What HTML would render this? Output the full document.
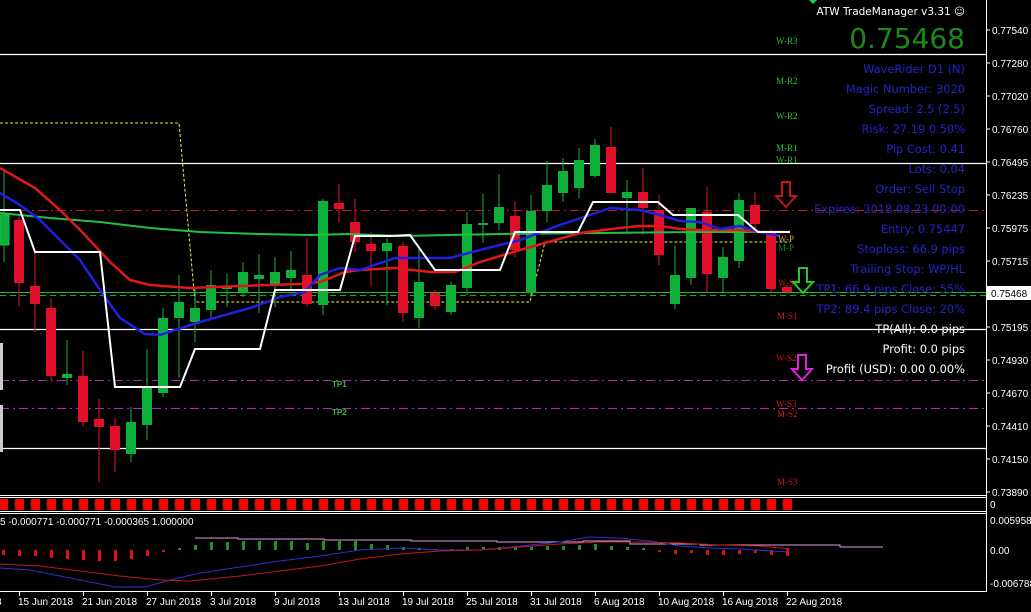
<!DOCTYPE html>
<html><head><meta charset="utf-8"><style>
html,body{margin:0;padding:0;background:#000;width:1031px;height:612px;overflow:hidden}
svg{display:block}
.ax{font-family:"Liberation Sans",sans-serif;font-size:10px;fill:#fff}
.info{font-family:"DejaVu Sans",sans-serif;font-size:11.4px;fill:#2424c8;text-anchor:end}
.pv{font-family:"Liberation Serif",serif;font-size:9px}
</style></head><body>
<svg width="1031" height="612" viewBox="0 0 1031 612" xmlns="http://www.w3.org/2000/svg">
<rect width="1031" height="612" fill="#000"/>
<g stroke="#fff" stroke-width="1.2">
<line x1="0" y1="54.5" x2="986" y2="54.5"/>
<line x1="0" y1="163.5" x2="986" y2="163.5"/>
<line x1="0" y1="329.5" x2="986" y2="329.5"/>
<line x1="0" y1="448.5" x2="986" y2="448.5"/>
</g>
<line x1="0" y1="210.5" x2="986" y2="210.5" stroke="#c81818" stroke-dasharray="9,4,2,4"/>
<line x1="0" y1="380.5" x2="986" y2="380.5" stroke="#c020c0" stroke-dasharray="9,4,2,4"/>
<line x1="0" y1="408.5" x2="986" y2="408.5" stroke="#c020c0" stroke-dasharray="9,4,2,4"/>
<line x1="0" y1="292.5" x2="986" y2="292.5" stroke="#22bb22"/>
<line x1="0" y1="295.5" x2="986" y2="295.5" stroke="#22aa22" stroke-dasharray="6,4"/>
<polyline fill="none" stroke="#f0f040" stroke-dasharray="3,2" points="0,123 179,123 195,302 530,302 545,242 790,242"/>
<rect x="0" y="343" width="3" height="47" fill="#ccc"/>
<rect x="0" y="405" width="3" height="47" fill="#ccc"/>
<g>
<line x1="4" y1="172" x2="4" y2="262" stroke="#1ab03a"/><rect x="0" y="215" width="9" height="30" fill="#0fb03a" stroke="#1ac04a"/>
<line x1="19" y1="215" x2="19" y2="307" stroke="#e0102a"/><rect x="14" y="220" width="10" height="63" fill="#e0102a"/>
<line x1="35" y1="252" x2="35" y2="332" stroke="#e0102a"/><rect x="30" y="286" width="10" height="18" fill="#e0102a"/>
<line x1="51" y1="298" x2="51" y2="380" stroke="#e0102a"/><rect x="46" y="308" width="10" height="68" fill="#e0102a"/>
<line x1="67" y1="340" x2="67" y2="385" stroke="#1ab03a"/><rect x="62" y="374" width="10" height="4" fill="#0fb03a"/>
<line x1="83" y1="351" x2="83" y2="427" stroke="#e0102a"/><rect x="78" y="376" width="10" height="46" fill="#e0102a"/>
<line x1="99" y1="399" x2="99" y2="483" stroke="#e0102a"/><rect x="94" y="419" width="10" height="8" fill="#e0102a"/>
<line x1="115" y1="418" x2="115" y2="472" stroke="#e0102a"/><rect x="110" y="426" width="10" height="24" fill="#e0102a"/>
<line x1="131" y1="407" x2="131" y2="462" stroke="#1ab03a"/><rect x="126" y="422" width="10" height="32" fill="#0fb03a"/>
<line x1="147" y1="349" x2="147" y2="440" stroke="#1ab03a"/><rect x="142" y="388" width="10" height="37" fill="#0fb03a"/>
<line x1="163" y1="308" x2="163" y2="397" stroke="#1ab03a"/><rect x="158" y="318" width="10" height="75" fill="#0fb03a"/>
<line x1="179" y1="275" x2="179" y2="378" stroke="#1ab03a"/><rect x="174" y="302" width="10" height="16" fill="#0fb03a"/>
<line x1="195" y1="287" x2="195" y2="342" stroke="#1ab03a"/><rect x="190" y="308" width="10" height="14" fill="#0fb03a"/>
<line x1="211" y1="270" x2="211" y2="318" stroke="#1ab03a"/><rect x="206" y="285" width="10" height="25" fill="#0fb03a"/>
<line x1="227" y1="274" x2="227" y2="307" stroke="#1ab03a"/><rect x="222" y="287" width="10" height="2" fill="#0fb03a"/>
<line x1="243" y1="262" x2="243" y2="297" stroke="#1ab03a"/><rect x="238" y="272" width="10" height="20" fill="#0fb03a"/>
<line x1="259" y1="254" x2="259" y2="313" stroke="#1ab03a"/><rect x="254" y="275" width="10" height="4" fill="#0fb03a"/>
<line x1="275" y1="257" x2="275" y2="307" stroke="#1ab03a"/><rect x="270" y="272" width="10" height="12" fill="#0fb03a"/>
<line x1="291" y1="251" x2="291" y2="290" stroke="#1ab03a"/><rect x="286" y="270" width="10" height="8" fill="#0fb03a"/>
<line x1="307" y1="238" x2="307" y2="307" stroke="#e0102a"/><rect x="302" y="275" width="10" height="29" fill="#e0102a"/>
<line x1="323" y1="199" x2="323" y2="315" stroke="#1ab03a"/><rect x="318" y="201" width="10" height="104" fill="#0fb03a"/>
<line x1="339" y1="184" x2="339" y2="223" stroke="#e0102a"/><rect x="334" y="203" width="10" height="6" fill="#e0102a"/>
<line x1="355" y1="199" x2="355" y2="252" stroke="#e0102a"/><rect x="350" y="222" width="10" height="20" fill="#e0102a"/>
<line x1="371" y1="232" x2="371" y2="286" stroke="#e0102a"/><rect x="366" y="244" width="10" height="7" fill="#e0102a"/>
<line x1="387" y1="238" x2="387" y2="305" stroke="#1ab03a"/><rect x="382" y="243" width="10" height="8" fill="#0fb03a"/>
<line x1="403" y1="242" x2="403" y2="322" stroke="#e0102a"/><rect x="398" y="246" width="10" height="67" fill="#e0102a"/>
<line x1="419" y1="247" x2="419" y2="328" stroke="#1ab03a"/><rect x="414" y="282" width="10" height="36" fill="#0fb03a"/>
<line x1="435" y1="290" x2="435" y2="310" stroke="#e0102a"/><rect x="430" y="293" width="10" height="13" fill="#e0102a"/>
<line x1="451" y1="282" x2="451" y2="315" stroke="#1ab03a"/><rect x="446" y="285" width="10" height="27" fill="#0fb03a"/>
<line x1="467" y1="212" x2="467" y2="295" stroke="#1ab03a"/><rect x="462" y="224" width="10" height="64" fill="#0fb03a"/>
<line x1="483" y1="194" x2="483" y2="243" stroke="#1ab03a"/><rect x="478" y="223" width="10" height="2" fill="#0fb03a"/>
<line x1="499" y1="174" x2="499" y2="230" stroke="#1ab03a"/><rect x="494" y="207" width="10" height="16" fill="#0fb03a"/>
<line x1="515" y1="201" x2="515" y2="257" stroke="#e0102a"/><rect x="510" y="216" width="10" height="34" fill="#e0102a"/>
<line x1="531" y1="195" x2="531" y2="297" stroke="#1ab03a"/><rect x="526" y="211" width="10" height="82" fill="#0fb03a"/>
<line x1="547" y1="161" x2="547" y2="222" stroke="#1ab03a"/><rect x="542" y="185" width="10" height="26" fill="#0fb03a"/>
<line x1="563" y1="158" x2="563" y2="202" stroke="#1ab03a"/><rect x="558" y="171" width="10" height="22" fill="#0fb03a"/>
<line x1="579" y1="148" x2="579" y2="198" stroke="#1ab03a"/><rect x="574" y="160" width="10" height="28" fill="#0fb03a"/>
<line x1="595" y1="139" x2="595" y2="178" stroke="#1ab03a"/><rect x="590" y="145" width="10" height="31" fill="#0fb03a"/>
<line x1="611" y1="127" x2="611" y2="193" stroke="#e0102a"/><rect x="606" y="147" width="10" height="46" fill="#e0102a"/>
<line x1="627" y1="180" x2="627" y2="233" stroke="#1ab03a"/><rect x="622" y="192" width="10" height="6" fill="#0fb03a"/>
<line x1="643" y1="168" x2="643" y2="235" stroke="#e0102a"/><rect x="638" y="192" width="10" height="16" fill="#e0102a"/>
<line x1="659" y1="195" x2="659" y2="265" stroke="#e0102a"/><rect x="654" y="210" width="10" height="45" fill="#e0102a"/>
<line x1="675" y1="246" x2="675" y2="309" stroke="#1ab03a"/><rect x="670" y="275" width="10" height="29" fill="#0fb03a"/>
<line x1="691" y1="208" x2="691" y2="285" stroke="#1ab03a"/><rect x="686" y="208" width="10" height="70" fill="#0fb03a"/>
<line x1="707" y1="187" x2="707" y2="293" stroke="#e0102a"/><rect x="702" y="212" width="10" height="62" fill="#e0102a"/>
<line x1="723" y1="247" x2="723" y2="292" stroke="#1ab03a"/><rect x="718" y="257" width="10" height="21" fill="#0fb03a"/>
<line x1="739" y1="193" x2="739" y2="268" stroke="#1ab03a"/><rect x="734" y="200" width="10" height="61" fill="#0fb03a"/>
<line x1="755" y1="192" x2="755" y2="232" stroke="#e0102a"/><rect x="750" y="205" width="10" height="19" fill="#e0102a"/>
<line x1="771" y1="229" x2="771" y2="292" stroke="#e0102a"/><rect x="766" y="231" width="10" height="58" fill="#e0102a"/>
<line x1="787" y1="285" x2="787" y2="294" stroke="#e0102a"/><rect x="782" y="287" width="10" height="5" fill="#e0102a"/>
</g>
<polyline fill="none" stroke="#22c040" stroke-width="2" points="0,213 50,218 100,222 150,228 200,232 260,234 310,235 350,234 400,236 500,234 600,233 700,232 790,232"/>
<polyline fill="none" stroke="#e01818" stroke-width="2.5" points="0,168 35,188 60,210 85,235 110,262 130,280 150,285 190,288 240,286 300,284 320,282 345,272 360,270 395,268 430,272 455,272 480,262 520,250 580,233 620,228 640,226 660,226 680,229 700,230 720,230 740,230 760,232 790,232"/>
<polyline fill="none" stroke="#2020e0" stroke-width="2.5" points="0,193 20,205 40,220 60,240 80,260 100,290 120,318 145,334 160,335 200,322 250,308 280,297 305,292 320,275 340,268 360,270 395,258 420,258 450,258 480,250 520,240 560,225 590,215 610,208 640,210 660,215 680,221 700,222 720,229 740,226 760,232 780,236"/>
<polyline fill="none" stroke="#fff" stroke-width="2" points="0,210 20,210 35,252 100,252 115,387 180,387 195,349 260,349 275,290 340,290 355,236 390,236 410,235 435,270 500,270 515,232 578,232 593,202 658,202 673,215 738,215 758,232 790,232"/>
<g class="pv">
<text x="776" y="44" fill="#30c030">W-R3</text>
<text x="776" y="84" fill="#30c030">M-R2</text>
<text x="776" y="119" fill="#30c030">W-R2</text>
<text x="776" y="151" fill="#30c030">M-R1</text>
<text x="776" y="163" fill="#30c030">W-R1</text>
<text x="778" y="242" fill="#c8b040">W-P</text>
<text x="778" y="251" fill="#208020">M-P</text>
<text x="778" y="286" fill="#d01818">W-S1</text>
<text x="777" y="319" fill="#d01818">M-S1</text>
<text x="776" y="361" fill="#d01818">W-S2</text>
<text x="776" y="407" fill="#d01818">W-S3</text>
<text x="777" y="417" fill="#d01818">M-S2</text>
<text x="777" y="485" fill="#d01818">M-S3</text>
<text x="332" y="387" fill="#30c030" font-family="Liberation Sans" font-weight="bold" font-size="8">TP1</text>
<text x="332" y="415" fill="#30c030" font-family="Liberation Sans" font-weight="bold" font-size="8">TP2</text>
</g>
<path d="M782,182 h8 v14 h6 l-10,11 l-10,-11 h6 z" fill="none" stroke="#c01818" stroke-width="2"/>
<path d="M799,268 h8 v14 h6 l-10,11 l-10,-11 h6 z" fill="none" stroke="#22cc22" stroke-width="2"/>
<path d="M798,355 h8 v14 h6 l-10,11 l-10,-11 h6 z" fill="none" stroke="#e020e0" stroke-width="2"/>
<path d="M809,0 h8 l-4,4 z" fill="#22cc44"/>
<text x="965" y="15" font-family="DejaVu Sans" font-size="10.5" fill="#fff" text-anchor="end">ATW TradeManager v3.31 ☺</text>
<text x="965" y="48" font-family="DejaVu Sans" font-size="28" fill="#1a8a1a" text-anchor="end">0.75468</text>
<g class="info">
<text x="965" y="73">WaveRider D1 (N)</text>
<text x="965" y="93">Magic Number: 3020</text>
<text x="965" y="113">Spread: 2.5 (2.5)</text>
<text x="965" y="133">Risk: 27.19 0.50%</text>
<text x="965" y="153">Pip Cost: 0.41</text>
<text x="965" y="173">Lots: 0.04</text>
<text x="965" y="193">Order: Sell Stop</text>
<text x="965" y="213">Expires: 2018.08.23 00:00</text>
<text x="965" y="233">Entry: 0.75447</text>
<text x="965" y="253">Stoploss: 66.9 pips</text>
<text x="965" y="273">Trailing Stop: WP/HL</text>
<text x="965" y="293">TP1: 66.9 pips Close: 55%</text>
<text x="965" y="313">TP2: 89.4 pips Close: 20%</text>
<text x="965" y="333" fill="#fff">TP(All): 0.0 pips</text>
<text x="965" y="353" fill="#fff">Profit: 0.0 pips</text>
<text x="965" y="373" fill="#fff">Profit (USD): 0.00 0.00%</text>
</g>
<line x1="986.5" y1="0" x2="986.5" y2="592" stroke="#fff"/>
<line x1="0" y1="495.5" x2="986" y2="495.5" stroke="#fff"/>
<line x1="0" y1="497.5" x2="986" y2="497.5" stroke="#fff"/>
<line x1="0" y1="511.5" x2="986" y2="511.5" stroke="#fff"/>
<line x1="0" y1="513.5" x2="986" y2="513.5" stroke="#fff"/>
<line x1="0" y1="591.5" x2="986" y2="591.5" stroke="#fff"/>
<g fill="#ff0000">
<rect x="0" y="499" width="8" height="11"/><rect x="15" y="499" width="9" height="11"/><rect x="31" y="499" width="9" height="11"/><rect x="47" y="499" width="9" height="11"/><rect x="63" y="499" width="9" height="11"/><rect x="79" y="499" width="9" height="11"/><rect x="95" y="499" width="9" height="11"/><rect x="111" y="499" width="9" height="11"/><rect x="127" y="499" width="9" height="11"/><rect x="143" y="499" width="9" height="11"/><rect x="159" y="499" width="9" height="11"/><rect x="175" y="499" width="9" height="11"/><rect x="191" y="499" width="9" height="11"/><rect x="207" y="499" width="9" height="11"/><rect x="223" y="499" width="9" height="11"/><rect x="239" y="499" width="9" height="11"/><rect x="255" y="499" width="9" height="11"/><rect x="271" y="499" width="9" height="11"/><rect x="287" y="499" width="9" height="11"/><rect x="303" y="499" width="9" height="11"/><rect x="319" y="499" width="9" height="11"/><rect x="335" y="499" width="9" height="11"/><rect x="351" y="499" width="9" height="11"/><rect x="367" y="499" width="9" height="11"/><rect x="383" y="499" width="9" height="11"/><rect x="399" y="499" width="9" height="11"/><rect x="415" y="499" width="9" height="11"/><rect x="431" y="499" width="9" height="11"/><rect x="447" y="499" width="9" height="11"/><rect x="463" y="499" width="9" height="11"/><rect x="479" y="499" width="9" height="11"/><rect x="495" y="499" width="9" height="11"/><rect x="511" y="499" width="9" height="11"/><rect x="527" y="499" width="9" height="11"/><rect x="543" y="499" width="9" height="11"/><rect x="559" y="499" width="9" height="11"/><rect x="575" y="499" width="9" height="11"/><rect x="591" y="499" width="9" height="11"/><rect x="607" y="499" width="9" height="11"/><rect x="623" y="499" width="9" height="11"/><rect x="639" y="499" width="9" height="11"/><rect x="655" y="499" width="9" height="11"/><rect x="671" y="499" width="9" height="11"/><rect x="687" y="499" width="9" height="11"/><rect x="703" y="499" width="9" height="11"/><rect x="719" y="499" width="9" height="11"/><rect x="735" y="499" width="9" height="11"/><rect x="751" y="499" width="9" height="11"/><rect x="767" y="499" width="9" height="11"/><rect x="783" y="499" width="9" height="11"/>
</g>
<text x="0" y="525" class="ax" font-size="9">5 -0.000771 -0.000771 -0.000365 1.000000</text>
<g fill="#e01010">
<rect x="2" y="550" width="3" height="5"/><rect x="18" y="550" width="3" height="6"/><rect x="34" y="550" width="3" height="6"/><rect x="50" y="550" width="3" height="8"/><rect x="66" y="550" width="3" height="9"/><rect x="82" y="550" width="3" height="10"/><rect x="98" y="550" width="3" height="11"/><rect x="114" y="550" width="3" height="11"/><rect x="130" y="550" width="3" height="9"/><rect x="146" y="550" width="3" height="6"/><rect x="162" y="550" width="3" height="2"/>
<rect x="658" y="550" width="3" height="2"/><rect x="674" y="550" width="3" height="4"/><rect x="690" y="550" width="3" height="3"/><rect x="706" y="550" width="3" height="5"/><rect x="722" y="550" width="3" height="5"/><rect x="738" y="550" width="3" height="4"/><rect x="754" y="550" width="3" height="3"/><rect x="770" y="550" width="3" height="5"/><rect x="786" y="548" width="3" height="8"/>
</g>
<g fill="#1a9a1a">
<rect x="178" y="548" width="3" height="2"/><rect x="194" y="545" width="3" height="5"/><rect x="210" y="542" width="3" height="8"/><rect x="226" y="542" width="3" height="8"/><rect x="242" y="541" width="3" height="9"/><rect x="258" y="541" width="3" height="9"/><rect x="274" y="541" width="3" height="9"/><rect x="290" y="541" width="3" height="9"/><rect x="306" y="543" width="3" height="7"/><rect x="322" y="541" width="3" height="9"/><rect x="338" y="541" width="3" height="9"/><rect x="354" y="541" width="3" height="9"/><rect x="370" y="544" width="3" height="6"/><rect x="386" y="545" width="3" height="5"/><rect x="402" y="547" width="3" height="3"/><rect x="418" y="548" width="3" height="2"/><rect x="434" y="549" width="3" height="1"/><rect x="450" y="549" width="3" height="1"/><rect x="466" y="547" width="3" height="3"/><rect x="482" y="547" width="3" height="3"/><rect x="498" y="547" width="3" height="3"/><rect x="514" y="547" width="3" height="3"/><rect x="530" y="547" width="3" height="3"/><rect x="546" y="546" width="3" height="4"/><rect x="562" y="546" width="3" height="4"/><rect x="578" y="545" width="3" height="5"/><rect x="594" y="544" width="3" height="6"/><rect x="610" y="546" width="3" height="4"/><rect x="626" y="547" width="3" height="3"/><rect x="642" y="548" width="3" height="2"/>
</g>
<polyline fill="none" stroke="#e0a0e0" points="195,538 238,538 238,539 324,539 324,540 411,540 411,541 497,541 497,542 583,542 583,541 630,541 630,544 700,544 700,545 840,545 840,547 883,547"/>
<polyline fill="none" stroke="#3030d0" points="0,568 30,570 60,576 90,582 115,587 145,587 170,580 200,573 240,567 280,561 320,556 360,550 400,548 440,550 480,550 520,546 560,542 590,537 620,538 650,541 680,546 710,548 740,549 770,551 790,552"/>
<polyline fill="none" stroke="#c01818" points="0,564 40,566 80,571 120,576 160,580 190,581 240,576 280,571 320,566 360,559 400,554 440,551 480,550 520,547 560,544 600,542 640,542 680,543 720,545 760,546 790,549"/>
<g class="ax">
<text x="992" y="34">0.77540</text><text x="992" y="67">0.77280</text><text x="992" y="100">0.77020</text><text x="992" y="133">0.76760</text><text x="992" y="166">0.76495</text><text x="992" y="199">0.76235</text><text x="992" y="232">0.75975</text><text x="992" y="265">0.75715</text><text x="992" y="331">0.75195</text><text x="992" y="364">0.74930</text><text x="992" y="397">0.74670</text><text x="992" y="430">0.74410</text><text x="992" y="463">0.74150</text><text x="992" y="496">0.73890</text>
<text x="990" y="524">0.005958</text><text x="990" y="554">0.00</text><text x="990" y="587">-0.006788</text>
<text x="990" y="508">0</text>
</g>
<rect x="987" y="286" width="44" height="14" fill="#fff"/>
<text x="991" y="297" class="ax" style="fill:#000">0.75468</text>
<g stroke="#fff">
<line x1="987" y1="30" x2="990" y2="30"/><line x1="987" y1="63" x2="990" y2="63"/><line x1="987" y1="96" x2="990" y2="96"/><line x1="987" y1="129" x2="990" y2="129"/><line x1="987" y1="162" x2="990" y2="162"/><line x1="987" y1="195" x2="990" y2="195"/><line x1="987" y1="228" x2="990" y2="228"/><line x1="987" y1="261" x2="990" y2="261"/><line x1="987" y1="327" x2="990" y2="327"/><line x1="987" y1="360" x2="990" y2="360"/><line x1="987" y1="393" x2="990" y2="393"/><line x1="987" y1="426" x2="990" y2="426"/><line x1="987" y1="459" x2="990" y2="459"/><line x1="987" y1="492" x2="990" y2="492"/>
</g>
<g class="ax">
<text x="-4" y="605">8</text><text x="18" y="605">15 Jun 2018</text><text x="82" y="605">21 Jun 2018</text><text x="146" y="605">27 Jun 2018</text><text x="210" y="605">3 Jul 2018</text><text x="274" y="605">9 Jul 2018</text><text x="338" y="605">13 Jul 2018</text><text x="402" y="605">19 Jul 2018</text><text x="466" y="605">25 Jul 2018</text><text x="530" y="605">31 Jul 2018</text><text x="594" y="605">6 Aug 2018</text><text x="658" y="605">10 Aug 2018</text><text x="722" y="605">16 Aug 2018</text><text x="786" y="605">22 Aug 2018</text>
</g>
<g stroke="#fff">
<line x1="19.5" y1="592" x2="19.5" y2="596"/><line x1="83.5" y1="592" x2="83.5" y2="596"/><line x1="147.5" y1="592" x2="147.5" y2="596"/><line x1="211.5" y1="592" x2="211.5" y2="596"/><line x1="275.5" y1="592" x2="275.5" y2="596"/><line x1="339.5" y1="592" x2="339.5" y2="596"/><line x1="403.5" y1="592" x2="403.5" y2="596"/><line x1="467.5" y1="592" x2="467.5" y2="596"/><line x1="531.5" y1="592" x2="531.5" y2="596"/><line x1="595.5" y1="592" x2="595.5" y2="596"/><line x1="659.5" y1="592" x2="659.5" y2="596"/><line x1="723.5" y1="592" x2="723.5" y2="596"/><line x1="787.5" y1="592" x2="787.5" y2="596"/>
</g>
</svg>
</body></html>
